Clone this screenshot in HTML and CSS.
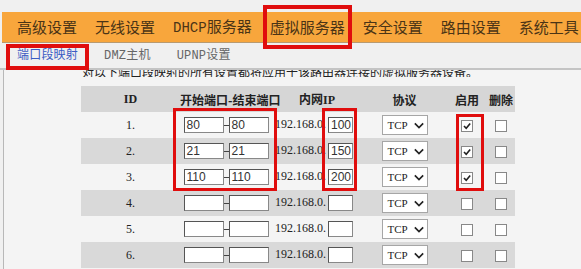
FILE: index.html
```html
<!DOCTYPE html>
<html lang="zh-CN">
<head>
  <meta charset="UTF-8">
  <title>虚拟服务器 - 端口段映射</title>
  <link rel="stylesheet" href="styles.css">
</head>
<body>
  <div class="page">
    <div class="nav">
      <span class="nav-item">高级设置</span>
      <span class="nav-item">无线设置</span>
      <span class="nav-item"><span class="latin">DHCP</span>服务器</span>
      <span class="nav-item">虚拟服务器</span>
      <span class="nav-item">安全设置</span>
      <span class="nav-item">路由设置</span>
      <span class="nav-item">系统工具</span>
    </div>

    <div class="tabs">
      <span class="tab active">端口段映射</span>
      <span class="tab">DMZ主机</span>
      <span class="tab">UPNP设置</span>
    </div>

    <div class="content">
      <div class="cut-note"><span>对以下端口段映射的所有设置都将应用于该路由器连接的虚拟服务器设备。</span></div>

      <table class="rules">
        <colgroup>
          <col class="c-id"><col class="c-port"><col class="c-ip"><col class="c-proto"><col class="c-on"><col class="c-del">
        </colgroup>
        <thead>
          <tr>
            <th class="latin">ID</th>
            <th>开始端口-结束端口</th>
            <th>内网<span class="latin">IP</span></th>
            <th>协议</th>
            <th>启用</th>
            <th>删除</th>
          </tr>
        </thead>
        <tbody>
          <tr>
            <td class="num">1.</td>
            <td><span class="port"><span class="field">80</span><i class="dash"></i><span class="field">80</span></span></td>
            <td class="ip">192.168.0.<span class="field short">100</span></td>
            <td><span class="select">TCP<svg viewBox="0 0 12 8"><path d="M1 1.5 L6 6.5 L11 1.5"/></svg></span></td>
            <td><span class="box checked"><svg viewBox="0 0 10 10"><path d="M2 5 L4.2 7.3 L8.2 2.5"/></svg></span></td>
            <td><span class="box"></span></td>
          </tr>
          <tr>
            <td class="num">2.</td>
            <td><span class="port"><span class="field">21</span><i class="dash"></i><span class="field">21</span></span></td>
            <td class="ip">192.168.0.<span class="field short">150</span></td>
            <td><span class="select">TCP<svg viewBox="0 0 12 8"><path d="M1 1.5 L6 6.5 L11 1.5"/></svg></span></td>
            <td><span class="box checked"><svg viewBox="0 0 10 10"><path d="M2 5 L4.2 7.3 L8.2 2.5"/></svg></span></td>
            <td><span class="box"></span></td>
          </tr>
          <tr>
            <td class="num">3.</td>
            <td><span class="port"><span class="field">110</span><i class="dash"></i><span class="field">110</span></span></td>
            <td class="ip">192.168.0.<span class="field short">200</span></td>
            <td><span class="select">TCP<svg viewBox="0 0 12 8"><path d="M1 1.5 L6 6.5 L11 1.5"/></svg></span></td>
            <td><span class="box checked"><svg viewBox="0 0 10 10"><path d="M2 5 L4.2 7.3 L8.2 2.5"/></svg></span></td>
            <td><span class="box"></span></td>
          </tr>
          <tr>
            <td class="num">4.</td>
            <td><span class="port"><span class="field"></span><i class="dash"></i><span class="field"></span></span></td>
            <td class="ip">192.168.0.<span class="field short"></span></td>
            <td><span class="select">TCP<svg viewBox="0 0 12 8"><path d="M1 1.5 L6 6.5 L11 1.5"/></svg></span></td>
            <td><span class="box"></span></td>
            <td><span class="box"></span></td>
          </tr>
          <tr>
            <td class="num">5.</td>
            <td><span class="port"><span class="field"></span><i class="dash"></i><span class="field"></span></span></td>
            <td class="ip">192.168.0.<span class="field short"></span></td>
            <td><span class="select">TCP<svg viewBox="0 0 12 8"><path d="M1 1.5 L6 6.5 L11 1.5"/></svg></span></td>
            <td><span class="box"></span></td>
            <td><span class="box"></span></td>
          </tr>
          <tr>
            <td class="num">6.</td>
            <td><span class="port"><span class="field"></span><i class="dash"></i><span class="field"></span></span></td>
            <td class="ip">192.168.0.<span class="field short"></span></td>
            <td><span class="select">TCP<svg viewBox="0 0 12 8"><path d="M1 1.5 L6 6.5 L11 1.5"/></svg></span></td>
            <td><span class="box"></span></td>
            <td><span class="box"></span></td>
          </tr>
        </tbody>
      </table>
    </div>

    <!-- red annotation boxes -->
    <div class="mark mark-nav"></div>
    <div class="mark mark-tab"></div>
    <div class="mark mark-port"></div>
    <div class="mark mark-ip"></div>
    <div class="mark mark-on"></div>
  </div>
</body>
</html>
```

FILE: styles.css
```css
body {
  margin: 0;
  background: #f0f0f0;
  font-family: 'Noto Sans CJK SC', sans-serif;
  color: #333;
  overflow: hidden;
}

.page {
  position: relative;
  height: 269px;
  padding-top: 12px;
  box-sizing: border-box;
}

.latin {
  font-family: 'Liberation Mono', 'Noto Sans CJK SC', monospace;
}

/* top menu */
.nav {
  margin-left: 2px;
  height: 30px;
  background: #f8a63c;
  border-bottom: 1px solid #b89a70;
  display: flex;
  align-items: center;
  gap: 18px;
  padding-left: 15px;
}

.nav-item {
  font-size: 15px;
  color: #4a3416;
  line-height: 30px;
  white-space: nowrap;
}

.nav-item .latin {
  font-size: 14px;
}

/* sub tabs */
.tabs {
  height: 25px;
  display: flex;
  align-items: center;
  padding-left: 4px;
  border-bottom: 2px solid #c4c4c4;
}

.tab {
  padding: 0 13px;
  font-family: 'Liberation Mono', 'Noto Sans CJK SC', monospace;
  font-size: 12px;
  line-height: 14px;
  color: #666;
  letter-spacing: 0.2px;
}

.tab.active {
  color: #3c5cc4;
}

/* content */
.content {
  margin-left: 3px;
  border-left: 1px solid #b8b8b8;
  background: #f4f4f4;
  height: 200px;
  padding-left: 77px;
}

.cut-note {
  height: 7px;
  overflow: hidden;
  font-size: 12px;
  color: #222;
  white-space: nowrap;
}

.cut-note span {
  display: block;
  line-height: 11px;
  margin-top: -4px;
  margin-left: 1px;
}

.rules {
  margin-top: 9px;
  width: 434px;
  table-layout: fixed;
  border-collapse: collapse;
}

.c-id { width: 99px; }
.c-port { width: 92px; }
.c-ip { width: 90px; }
.c-proto { width: 85px; }
.c-on { width: 40px; }
.c-del { width: 28px; }

.rules th {
  height: 26px;
  padding: 0;
  background: #d6d6d6;
  font-size: 12px;
  font-weight: bold;
  color: #222;
  white-space: nowrap;
}

.rules th.latin {
  font-family: 'Liberation Serif', serif;
  font-size: 12px;
}

.rules th .latin {
  font-family: 'Liberation Serif', serif;
}

.rules td {
  height: 26px;
  padding: 0;
  text-align: center;
  font-family: 'Liberation Serif', serif;
  font-size: 12px;
  color: #222;
  white-space: nowrap;
}

.rules tbody tr:nth-child(even) td {
  background: #d9d9d9;
}

.port {
  display: inline-flex;
  align-items: center;
  vertical-align: middle;
}

.field {
  display: inline-block;
  box-sizing: border-box;
  width: 40px;
  height: 16px;
  background: #fff;
  border: 1px solid #555;
  border-right-color: #888;
  border-bottom-color: #888;
  font-family: 'Liberation Sans', sans-serif;
  font-size: 12px;
  line-height: 14px;
  text-align: left;
  padding-left: 2px;
  color: #333;
  vertical-align: middle;
}

.dash {
  display: inline-block;
  width: 5px;
  height: 1px;
  background: #444;
}

.ip {
  text-align: left !important;
  padding-left: 3px !important;
}

.field.short {
  width: 25px;
  margin-left: 2px;
}

.select {
  display: inline-flex;
  align-items: center;
  justify-content: space-between;
  box-sizing: border-box;
  width: 46px;
  height: 20px;
  padding: 0 3px 0 5px;
  background: #fff;
  border: 1px solid #a6a6a6;
  font-family: 'Liberation Serif', serif;
  font-size: 11px;
  color: #222;
  vertical-align: middle;
}

.select svg {
  width: 10px;
  height: 7px;
  fill: none;
  stroke: #222;
  stroke-width: 2;
}

.box {
  display: inline-block;
  box-sizing: border-box;
  width: 12px;
  height: 12px;
  border: 1px solid #888;
  background: #fff;
  vertical-align: middle;
}

.box svg {
  display: block;
  width: 10px;
  height: 10px;
  fill: none;
  stroke: #222;
  stroke-width: 1.6;
}

/* red annotation boxes */
.mark {
  position: absolute;
  box-sizing: border-box;
  border: 4px solid #e00d0d;
}

.mark-nav { left: 263px; top: 5px; width: 89px; height: 44px; }
.mark-tab { left: 6px; top: 44px; width: 83px; height: 26px; }
.mark-port { left: 173px; top: 108px; width: 104px; height: 83px; border-width: 3px; }
.mark-ip { left: 322px; top: 108px; width: 35px; height: 83px; border-width: 3px; }
.mark-on { left: 456px; top: 114px; width: 28px; height: 77px; border-width: 3px; }
```
